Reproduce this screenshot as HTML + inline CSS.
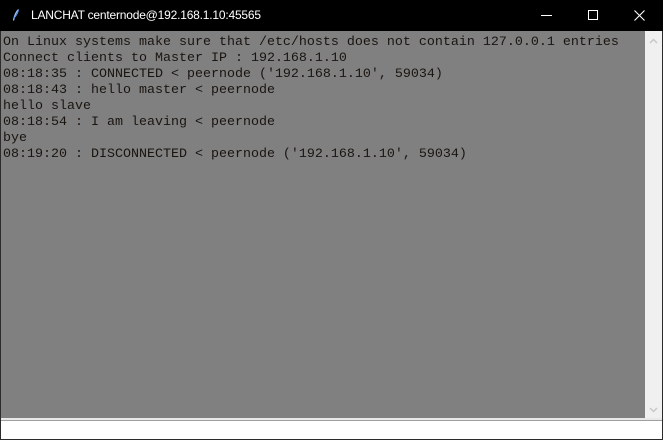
<!DOCTYPE html>
<html><head><meta charset="utf-8"><style>
*{margin:0;padding:0;box-sizing:border-box}
body{width:663px;height:440px;background:#2b2b2b;position:relative;overflow:hidden;font-family:"Liberation Sans",sans-serif}
.title{position:absolute;left:0;top:0;width:663px;height:31px;background:#000;color:#fff}
.title .t{position:absolute;left:31px;top:8px;font-size:12px;letter-spacing:-0.2px}
.main{position:absolute;left:1px;top:31px;width:644px;height:387px;background:#808080}
.log{position:absolute;left:2px;top:4px;font-family:"Liberation Mono",monospace;font-size:13.33px;line-height:16px;color:#1a1410;white-space:pre}
.sb{position:absolute;left:645px;top:31px;width:17px;height:388px;background:#f0f0f0}
.sep{position:absolute;left:1px;top:418px;width:661px;height:3px;background:#e8e8e8;border-bottom:1px solid #a0a0a0}
.inp{position:absolute;left:1px;top:421px;width:661px;height:18px;background:#fff}
</style></head><body>
<div class="title">
<svg style="position:absolute;left:12px;top:9px" width="8" height="12" viewBox="0 0 8 12"><path d="M6.5 0.5 C4 3 2.5 6 1.5 11.5" stroke="#9cc4ff" stroke-width="1.3" fill="none"/><path d="M6.5 0.5 C6 4 4 7 2 9" stroke="#5a8fe0" stroke-width="1" fill="none"/></svg>
<div class="t">LANCHAT centernode@192.168.1.10:45565</div>
<svg style="position:absolute;left:541px;top:15px" width="11" height="1"><rect width="11" height="1" fill="#fff"/></svg>
<svg style="position:absolute;left:588px;top:10px" width="10" height="10"><rect x="0.5" y="0.5" width="9" height="9" stroke="#fff" fill="none"/></svg>
<svg style="position:absolute;left:634px;top:10px" width="11" height="11"><path d="M0.5 0.5L10.5 10.5M10.5 0.5L0.5 10.5" stroke="#fff" stroke-width="1.1"/></svg>
</div>
<div class="main"><div class="log">On Linux systems make sure that /etc/hosts does not contain 127.0.0.1 entries
Connect clients to Master IP : 192.168.1.10
08:18:35 : CONNECTED &lt; peernode ('192.168.1.10', 59034)
08:18:43 : hello master &lt; peernode
hello slave
08:18:54 : I am leaving &lt; peernode
bye
08:19:20 : DISCONNECTED &lt; peernode ('192.168.1.10', 59034)</div></div>
<div class="sb">
<svg style="position:absolute;left:4px;top:7px" width="9" height="6"><path d="M1 5L4.5 1.5L8 5" stroke="#c8c8c8" stroke-width="1.5" fill="none"/></svg>
<svg style="position:absolute;left:4px;top:376px" width="9" height="6"><path d="M1 1L4.5 4.5L8 1" stroke="#c8c8c8" stroke-width="1.5" fill="none"/></svg>
</div>
<div class="sep"></div>
<div class="inp"></div>
</body></html>
